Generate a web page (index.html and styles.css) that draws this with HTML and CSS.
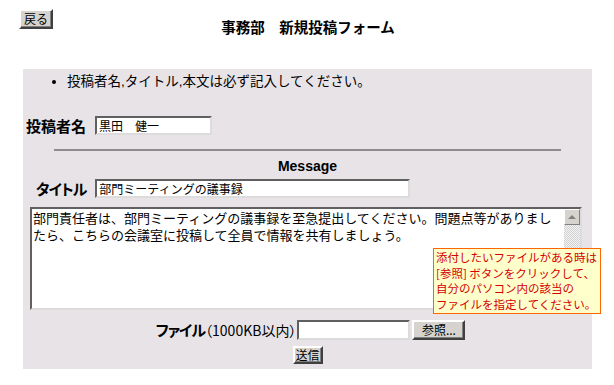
FILE: index.html
```html
<!DOCTYPE html>
<html lang="ja">
<head>
	<meta charset="UTF-8">
	<meta name="viewport" content="width=device-width, initial-scale=1.0">
	<title>事務部 新規投稿フォーム</title>
	<link rel="stylesheet" href="styles.css">
</head>
<body>
	<!-- header -->
	<div class="header">
		<button type="button" class="btn back_btn">戻る</button>
		<h1 class="page_title">事務部　新規投稿フォーム</h1>
	</div>

	<!-- form -->
	<form class="form_box" action="#">
		<ul class="notice">
			<li>投稿者名,タイトル,本文は必ず記入してください。</li>
		</ul>

		<div class="row poster_row">
			<label class="label" for="poster">投稿者名</label>
			<input type="text" id="poster" class="field poster_field" value="黒田　健一">
		</div>

		<hr class="divider">
		<p class="section_title">Message</p>

		<div class="row title_row">
			<label class="label kana" for="subject">タイトル</label>
			<input type="text" id="subject" class="field subject_field" value="部門ミーティングの議事録">
		</div>

		<div class="message_box">
			<textarea class="message_text">部門責任者は、部門ミーティングの議事録を至急提出してください。問題点等がありまし
たら、こちらの会議室に投稿して全員で情報を共有しましょう。</textarea>
			<div class="scrollbar">
				<div class="scroll_up">
					<svg width="8" height="4" viewBox="0 0 8 4"><path d="M0 4 L4 0 L8 4 Z" fill="#808080"/></svg>
				</div>
				<div class="scroll_track"></div>
			</div>
		</div>

		<div class="row file_row">
			<label class="label kana" for="attach">ファイル</label><span class="limit">（1000KB以内）</span>
			<input type="text" id="attach" class="field file_field">
			<button type="button" class="btn browse_btn">参照...</button>
		</div>

		<div class="row submit_row">
			<button type="submit" class="btn submit_btn">送信</button>
		</div>

		<div class="tooltip">
			添付したいファイルがある時は<br>
			[参照] ボタンをクリックして、<br>
			自分のパソコン内の該当の<br>
			ファイルを指定してください。
		</div>
	</form>
</body>
</html>
```

FILE: styles.css
```css
body {
	margin: 0;
	font-family: "Liberation Sans", "Noto Sans CJK JP", sans-serif;
	font-size: 13px;
	color: #000;
	background: #fff;
}
.header {
	display: grid;
	height: 69px;
}
.back_btn {
	grid-area: 1 / 1;
	justify-self: start;
	align-self: start;
	margin: 9px 0 0 19px;
	width: 34px;
	height: 20px;
}
.page_title {
	grid-area: 1 / 1;
	justify-self: center;
	align-self: start;
	margin: 18px 0 0 2px;
	font-size: 14.5px;
	line-height: 20px;
	font-weight: bold;
}
.btn {
	font-family: "Noto Sans CJK JP", sans-serif;
	font-size: 12px;
	line-height: 14px;
	padding: 0;
	background: #d6d3ce;
	border: 2px solid;
	border-color: #fff #404040 #404040 #fff;
	box-shadow: inset -1px -1px 0 #808080;
	color: #000;
}
.form_box {
	position: relative;
	margin-left: 23px;
	width: 569px;
	background: #e7e3e7;
	padding: 5px 0 5px 0;
}
.notice {
	margin: 0;
	padding-left: 44px;
	font-size: 13.5px;
	line-height: 16px;
}
.row {
	display: flex;
	align-items: center;
}
.label {
	font-weight: bold;
	font-size: 15px;
	font-family: "Noto Sans CJK JP", sans-serif;
	font-feature-settings: "palt";
}
.label.kana {
	letter-spacing: -1px;
}
.field {
	box-sizing: border-box;
	height: 19px;
	padding: 0 2px;
	font-family: "Noto Sans CJK JP", sans-serif;
	font-size: 12px;
	background: #fff;
	border: 2px solid;
	border-color: #606060 #dcdcdc #dcdcdc #606060;
	outline: none;
}
.poster_row {
	margin-top: 25px;
	padding-left: 3px;
	gap: 9px;
}
.poster_field {
	width: 117px;
}
.divider {
	width: 507px;
	margin: 13px auto 0 auto;
	border: 0;
	border-top: 2px solid #8e8a8e;
	height: 0;
}
.section_title {
	margin: 7px 0 0 0;
	text-align: center;
	font-weight: bold;
	font-size: 14px;
	line-height: 16px;
}
.title_row {
	margin-top: 4px;
	padding-left: 13px;
	gap: 9px;
}
.subject_field {
	width: 315px;
}
.message_box {
	display: flex;
	box-sizing: border-box;
	margin: 8px 0 0 7px;
	width: 552px;
	height: 103px;
	background: #fff;
	border: 2px solid;
	border-color: #606060 #dcdcdc #dcdcdc #606060;
}
.message_text {
	flex: 1;
	min-width: 0;
	border: 0;
	padding: 0 0 0 1px;
	margin: 0;
	resize: none;
	outline: none;
	font-family: "Noto Sans CJK JP", monospace;
	font-size: 13px;
	line-height: 17px;
	white-space: pre-wrap;
	overflow: hidden;
}
.scrollbar {
	width: 16px;
	display: flex;
	flex-direction: column;
}
.scroll_up {
	box-sizing: border-box;
	height: 16px;
	display: flex;
	align-items: center;
	justify-content: center;
	background: #d6d3ce;
	border: 1px solid;
	border-color: #fff #808080 #808080 #fff;
}
.scroll_track {
	flex: 1;
	background-color: #f4f4f4;
	background-image: repeating-conic-gradient(#d0d0d0 0 25%, #f4f4f4 0 50%);
	background-size: 2px 2px;
}
.file_row {
	justify-content: center;
	margin-top: 9px;
	padding-left: 6px;
}
.limit {
	font-size: 14px;
	font-family: "Noto Sans CJK JP", sans-serif;
	font-feature-settings: "palt";
}
.file_field {
	width: 113px;
	height: 20px;
	margin-left: 1px;
}
.browse_btn {
	margin-left: 2px;
	width: 53px;
	height: 20px;
}
.submit_row {
	justify-content: center;
	margin-top: 6px;
}
.submit_btn {
	width: 30px;
	height: 18px;
}
.tooltip {
	position: absolute;
	left: 410px;
	top: 179px;
	width: 162px;
	padding: 1px 2px 1px 2px;
	background: #ffffcc;
	border: 1px solid #ff6600;
	color: #d40000;
	font-family: "Noto Sans CJK JP", sans-serif;
	font-size: 11.5px;
	line-height: 15.5px;
	white-space: nowrap;
}
```
